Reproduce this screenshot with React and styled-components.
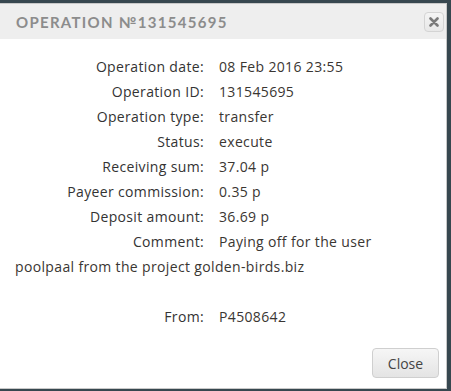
import React from 'react';
import styled, { createGlobalStyle } from 'styled-components';

const Global = createGlobalStyle`
  html, body {
    margin: 0;
    padding: 0;
    background: #37474f;
    height: 391px;
    overflow: hidden;
  }
  body {
    font-family: "Open Sans", "Liberation Sans", sans-serif;
  }
`;

const Dialog = styled.div`
  margin-top: 3px;
  width: 446px;
  height: 384px;
  background: #fff;
  border: 1px solid #c8c8c8;
  border-left: none;
  display: flex;
  flex-direction: column;
`;

const Header = styled.div`
  height: 35px;
  background: #eeeeee;
  display: flex;
  align-items: center;
  justify-content: space-between;
  padding: 0 2px 0 16px;
`;

const Title = styled.h2`
  margin: 0;
  font-family: Lato, "Liberation Sans", sans-serif;
  font-size: 15px;
  font-weight: 700;
  letter-spacing: 1.3px;
  color: #8c8c8c;
`;

const IconButton = styled.button`
  width: 20px;
  height: 20px;
  padding: 0;
  border: 1px solid #d4d4d4;
  border-radius: 4px;
  background: linear-gradient(#f4f4f4, #e8e8e8);
  display: flex;
  align-items: center;
  justify-content: center;
  color: #7a7a7a;
`;

const Body = styled.div`
  flex: 1;
  padding: 15px 15px 0 15px;
  font-size: 14px;
  line-height: 25px;
  letter-spacing: 0.35px;
  color: #3a3632;
`;

const Row = styled.div`
  min-height: 25px;
`;

const Label = styled.span`
  display: inline-block;
  width: 204px;
  padding-right: 15px;
  box-sizing: border-box;
  text-align: right;
  color: #333;
`;

const Footer = styled.div`
  display: flex;
  justify-content: flex-end;
  padding: 0 7px 10px 0;
`;

const Button = styled.button`
  width: 67px;
  height: 30px;
  font-family: "Open Sans", "Liberation Sans", sans-serif;
  font-size: 14px;
  color: #444;
  border: 1px solid #cfcfcf;
  border-radius: 4px;
  background: linear-gradient(#f6f6f6, #e4e4e4);
`;

const rows = [
  ['Operation date:', '08 Feb 2016 23:55'],
  ['Operation ID:', '131545695'],
  ['Operation type:', 'transfer'],
  ['Status:', 'execute'],
  ['Receiving sum:', '37.04 р'],
  ['Payeer commission:', '0.35 р'],
  ['Deposit amount:', '36.69 р'],
];

export default function App() {
  return (
    <>
      <Global />
      <Dialog>
        <Header>
          <Title>OPERATION №131545695</Title>
          <IconButton aria-label="close">
            <svg width="10" height="10" viewBox="0 0 10 10">
              <path d="M1.5 1.5 L8.5 8.5 M8.5 1.5 L1.5 8.5" stroke="currentColor" strokeWidth="2.6" strokeLinecap="round" />
            </svg>
          </IconButton>
        </Header>
        <Body>
          {rows.map(([k, v]) => (
            <Row key={k}>
              <Label>{k}</Label>
              {v}
            </Row>
          ))}
          <Row>
            <Label>Comment:</Label>
            Paying off for the user<br />poolpaal from the project golden-birds.biz
          </Row>
          <Row />
          <Row>
            <Label>From:</Label>
            P4508642
          </Row>
        </Body>
        <Footer>
          <Button>Close</Button>
        </Footer>
      </Dialog>
    </>
  );
}
